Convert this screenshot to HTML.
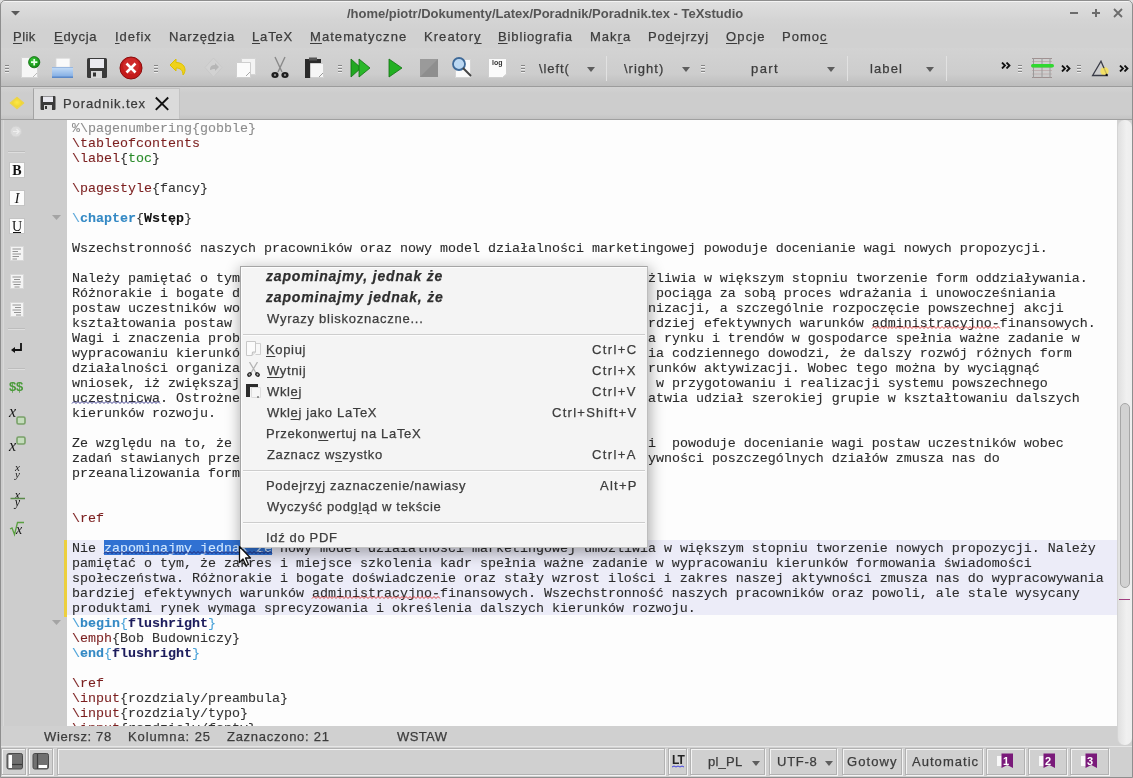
<!DOCTYPE html><html><head><meta charset="utf-8"><style>
*{margin:0;padding:0;box-sizing:border-box}
html,body{-webkit-font-smoothing:antialiased;width:1133px;height:778px;overflow:hidden;background:#d3d3d3;font-family:"Liberation Sans",sans-serif}
.a{position:absolute}
.ui{position:absolute;will-change:transform;-webkit-text-stroke:0.25px currentColor;font-family:"Liberation Sans",sans-serif;font-size:13px;color:#3c3c3c;white-space:nowrap;line-height:16px;letter-spacing:0.55px}
#win{position:absolute;left:0;top:0;width:1133px;height:778px;overflow:hidden;background:#d2d2d2}
#frame{position:absolute;left:0;top:0;width:1133px;height:778px;border:1px solid #8e8e8e;border-radius:5px 5px 0 0}
#title{position:absolute;left:0;top:0;width:1133px;height:48px;background:linear-gradient(#e0e0e0 0px,#d4d4d4 20px,#d1d1d1 30px,#d1d1d1 48px)}
#tbar{position:absolute;left:0;top:48px;width:1133px;height:39px;background:linear-gradient(#d3d3d3 0px,#cdcdcd 26px,#bdbdbd 38px);border-bottom:1px solid #9c9c9c}
#tabs{position:absolute;left:0;top:87px;width:1133px;height:33px;background:linear-gradient(#d2d2d2,#cdcdcd 20%,#cdcdcd 85%,#c4c4c4);border-bottom:1px solid #a0a0a0}
#tab{position:absolute;left:33px;top:88px;width:147px;height:31px;background:#dbdbdb;border:1px solid #c4c4c4;border-left-color:#a4a4a4;border-bottom:none}
#side{position:absolute;left:0;top:120px;width:67px;height:606px;background:#cdcdcd}
#ed{position:absolute;left:67px;top:120px;width:1050px;height:606px;background:#fdfdfd;overflow:hidden}
.ln{position:absolute;will-change:transform;-webkit-text-stroke:0.1px currentColor;left:5px;height:15px;line-height:15px;font-family:"Liberation Mono",monospace;font-size:13.333px;color:#2b2b2b;white-space:pre}
.ln .c{color:#8c8c8c}
.ln .k{color:#7b1f1f}
.ln .b{color:#333}
.ln .g{color:#2a8a2a}
.ln .s{color:#5aa6d8}
.ln .sbold{color:#3489c4;font-weight:bold}
.ln .sb{color:#111;font-weight:bold}
.ln .bl{color:#4aa2d8}
.ln .blb{color:#3489c4;font-weight:bold}
.ln .fb{color:#1c1c5c;font-weight:bold}
.ln .h{color:transparent}
.ln .sel{color:#d2e8ff}
#band{position:absolute;left:0;top:420px;width:1050px;height:76px;background:#ececf8}
#scroll{position:absolute;left:1117px;top:120px;width:15px;height:625px;background:linear-gradient(90deg,#e0e0e0,#f0f0f0 60%,#eeeeee);border-left:1px solid #d4d4d4;border-radius:7px}
#status{position:absolute;left:0;top:726px;width:1133px;height:20px;background:#d0d0d0}
#bottom{position:absolute;left:0;top:746px;width:1133px;height:32px;background:#d0d0d0;border-top:1px solid #e6e6e6}
.sbx{position:absolute;top:748px;height:25px;border:1px solid #f0f0f0;border-right-color:#b4b4b4;border-bottom-color:#b4b4b4;background:#d0d0d0}
#menu{position:absolute;left:240px;top:266px;width:408px;height:282px;background:#f4f4f4;border:1px solid #a5a5a5;border-right-color:#bdbdbd;border-bottom-color:#c4c4c4;box-shadow:1px 4px 13px 2px rgba(0,0,0,0.30),inset 1px 1px 0 #fdfdfd}
.mi{position:absolute;will-change:transform;font-family:"Liberation Sans",sans-serif;font-size:13px;color:#3c3c3c;white-space:nowrap;letter-spacing:0.55px;line-height:16px}
.sep{position:absolute;left:2px;width:402px;height:2px;border-top:1px solid #cdcdcd;border-bottom:1px solid #fcfcfc}
u{text-decoration:underline;text-underline-offset:2px;text-decoration-thickness:1px}
</style></head><body><div id="win">
<div id="title"></div>
<div class="a" style="left:1px;top:1px;width:1131px;height:1px;background:#f4f4f4"></div>
<svg class="a" style="will-change:transform;left:11px;top:11px;" width="9" height="5" viewBox="0 0 9 5"><path d="M0 0H9L4.5 4.5Z" fill="#5a5a5a"/></svg><svg class="a" style="will-change:transform;left:1068px;top:8px;" width="12" height="10" viewBox="0 0 12 10"><rect x="2" y="4" width="8" height="2" fill="#6c6c6c"/></svg><svg class="a" style="will-change:transform;left:1090px;top:8px;" width="12" height="10" viewBox="0 0 12 10"><rect x="2" y="4" width="8" height="2" fill="#6c6c6c"/><rect x="5" y="1" width="2" height="8" fill="#6c6c6c"/></svg><svg class="a" style="will-change:transform;left:1112px;top:8px;" width="12" height="10" viewBox="0 0 12 10"><path d="M2 1L10 9M10 1L2 9" stroke="#6c6c6c" stroke-width="1.8"/></svg>
<div class="ui" style="left:347.30px;top:5.50px;letter-spacing:-0.013px;font-size:13px;font-weight:bold;color:#555;-webkit-text-stroke:0;">/home/piotr/Dokumenty/Latex/Poradnik/Poradnik.tex - TeXstudio</div>
<div class="ui" style="left:13.30px;top:28.50px;letter-spacing:0.467px;font-size:13px;;"><u>P</u>lik</div>
<div class="ui" style="left:53.80px;top:28.50px;letter-spacing:0.700px;font-size:13px;;"><u>E</u>dycja</div>
<div class="ui" style="left:115.20px;top:28.50px;letter-spacing:0.940px;font-size:13px;;"><u>I</u>defix</div>
<div class="ui" style="left:168.90px;top:28.50px;letter-spacing:0.825px;font-size:13px;;">Narzę<u>d</u>zia</div>
<div class="ui" style="left:252.30px;top:28.50px;letter-spacing:0.850px;font-size:13px;;"><u>L</u>aTeX</div>
<div class="ui" style="left:309.90px;top:28.50px;letter-spacing:1.055px;font-size:13px;;"><u>M</u>atematyczne</div>
<div class="ui" style="left:423.80px;top:28.50px;letter-spacing:1.057px;font-size:13px;;">Kreator<u>y</u></div>
<div class="ui" style="left:498.00px;top:28.50px;letter-spacing:0.873px;font-size:13px;;"><u>B</u>ibliografia</div>
<div class="ui" style="left:589.90px;top:28.50px;letter-spacing:1.000px;font-size:13px;;">Mak<u>r</u>a</div>
<div class="ui" style="left:648.20px;top:28.50px;letter-spacing:0.825px;font-size:13px;;">Po<u>d</u>ejrzyj</div>
<div class="ui" style="left:725.80px;top:28.50px;letter-spacing:1.150px;font-size:13px;;"><u>O</u>pcje</div>
<div class="ui" style="left:781.70px;top:28.50px;letter-spacing:1.000px;font-size:13px;;">Pomo<u>c</u></div>
<div id="tbar"></div>
<svg class="a" style="will-change:transform;left:5px;top:65px;" width="5" height="8" viewBox="0 0 5 8"><g fill="#858585"><rect x="0" y="0" width="4" height="1"/><rect x="0" y="3" width="4" height="1"/><rect x="0" y="6" width="4" height="1"/></g><g fill="#ececec"><rect x="0" y="1" width="4" height="1"/><rect x="0" y="4" width="4" height="1"/><rect x="0" y="7" width="4" height="1"/></g></svg><svg class="a" style="will-change:transform;left:19px;top:56px;" width="22" height="23" viewBox="0 0 22 23"><path d="M2.5 1.5H13L18.5 7V21.5H2.5Z" fill="#f6f6f6" stroke="#d4d4d4"/><path d="M14 21L18 17" stroke="#bbb"/><defs><radialGradient id="gp" cx="0.4" cy="0.35" r="0.7"><stop offset="0" stop-color="#3ccc3c"/><stop offset="1" stop-color="#0e860e"/></radialGradient></defs><circle cx="15.2" cy="6.2" r="5.6" fill="url(#gp)" stroke="#0b6a0b" stroke-width="0.8"/><path d="M15.2 3V9.4M12 6.2H18.4" stroke="#e8ffe8" stroke-width="1.7"/></svg><svg class="a" style="will-change:transform;left:51px;top:57px;" width="23" height="22" viewBox="0 0 23 22"><defs><linearGradient id="tray" x1="0" y1="0" x2="0" y2="1"><stop offset="0" stop-color="#c4dcf6"/><stop offset="1" stop-color="#7eaae2"/></linearGradient></defs><rect x="5" y="1.2" width="14" height="9" fill="#fafafa" stroke="#d8d8d8" stroke-width="0.8"/><path d="M1 10.5H22V20.5H1Z" fill="url(#tray)"/><path d="M1 10.5H22" stroke="#9ab8e0"/><rect x="1" y="19.5" width="21" height="1.5" fill="#5a88c8"/></svg><svg class="a" style="will-change:transform;left:86px;top:57px;" width="22" height="22" viewBox="0 0 22 22"><rect x="1" y="1" width="20" height="20" rx="1.5" fill="#3a3a3a"/><rect x="4" y="2" width="14" height="9" fill="#eaeaf0"/><rect x="5" y="14" width="11" height="7" fill="#d8d8d8"/><rect x="7" y="15.5" width="3" height="4" fill="#333"/></svg><svg class="a" style="will-change:transform;left:119px;top:56px;" width="24" height="24" viewBox="0 0 24 24"><circle cx="12" cy="12" r="11" fill="#c41a1a" stroke="#8a0c0c"/><circle cx="12" cy="10" r="8" fill="#d83a3a" opacity="0.5"/><path d="M7.5 7.5L16.5 16.5M16.5 7.5L7.5 16.5" stroke="#fff" stroke-width="2.6"/></svg><svg class="a" style="will-change:transform;left:154px;top:65px;" width="5" height="8" viewBox="0 0 5 8"><g fill="#858585"><rect x="0" y="0" width="4" height="1"/><rect x="0" y="3" width="4" height="1"/><rect x="0" y="6" width="4" height="1"/></g><g fill="#ececec"><rect x="0" y="1" width="4" height="1"/><rect x="0" y="4" width="4" height="1"/><rect x="0" y="7" width="4" height="1"/></g></svg><svg class="a" style="will-change:transform;left:167px;top:57px;" width="21" height="19" viewBox="0 0 21 19"><path d="M3 8L9 2V5.5C15 5.5 18 9 18 13C18 15 17 17 16 18C16 13 13 11 9 11V14Z" fill="#efd21c" stroke="#dcc000" stroke-width="1"/></svg><svg class="a" style="will-change:transform;left:203px;top:57px;" width="21" height="21" viewBox="0 0 21 21"><path d="M10.5 1L19 10.5L10.5 20L2 10.5Z" fill="#d2d2d2" stroke="#c6c6c6" stroke-width="0.8"/><path d="M7 13C7 9 9 8 12 8V6L16 10L12 14V12C10 12 8.5 12.5 7 13Z" fill="#b6b6b6"/></svg><svg class="a" style="will-change:transform;left:235px;top:57px;" width="23" height="22" viewBox="0 0 23 22"><path d="M6.5 1.5H20.5V17.5H6.5Z" fill="#f4f4f4" stroke="#d4d4d4"/><path d="M1.5 5.5H15.5V20.5H1.5Z" fill="#fbfbfb" stroke="#cfcfcf"/><path d="M11 19L15 15" stroke="#aaa"/></svg><svg class="a" style="will-change:transform;left:269px;top:56px;" width="22" height="24" viewBox="0 0 22 24"><path d="M6 1L13 16M16 1L9 16" stroke="#8a8a8a" stroke-width="1.4"/><ellipse cx="6" cy="19" rx="3.6" ry="3" fill="#1e1e1e"/><ellipse cx="16" cy="19" rx="3.6" ry="3" fill="#1e1e1e"/><circle cx="6" cy="19" r="1.2" fill="#888"/><circle cx="16" cy="19" r="1.2" fill="#888"/></svg><svg class="a" style="will-change:transform;left:303px;top:57px;" width="23" height="22" viewBox="0 0 23 22"><path d="M2 2H18V21H2Z" fill="#2a2a2a"/><rect x="6" y="0.5" width="8" height="3" fill="#555"/><path d="M7.5 6.5H20.5V20.5H7.5Z" fill="#f6f6f6" stroke="#d0d0d0"/><path d="M16 20L20 16" stroke="#999"/></svg><svg class="a" style="will-change:transform;left:338px;top:65px;" width="5" height="8" viewBox="0 0 5 8"><g fill="#858585"><rect x="0" y="0" width="4" height="1"/><rect x="0" y="3" width="4" height="1"/><rect x="0" y="6" width="4" height="1"/></g><g fill="#ececec"><rect x="0" y="1" width="4" height="1"/><rect x="0" y="4" width="4" height="1"/><rect x="0" y="7" width="4" height="1"/></g></svg><svg class="a" style="will-change:transform;left:350px;top:58px;" width="22" height="20" viewBox="0 0 22 20"><path d="M1 1L11 10L1 19Z" fill="#22a822" stroke="#127012" stroke-width="0.8"/><path d="M9 1L20 10L9 19Z" fill="#2ab82a" stroke="#127012" stroke-width="0.8"/></svg><svg class="a" style="will-change:transform;left:387px;top:58px;" width="17" height="20" viewBox="0 0 17 20"><path d="M2 1L15 10L2 19Z" fill="#22b022" stroke="#127012" stroke-width="0.8"/></svg><svg class="a" style="will-change:transform;left:419px;top:58px;" width="20" height="20" viewBox="0 0 20 20"><rect x="1" y="1" width="18" height="18" fill="#8e8e8e"/><path d="M1 1H19L1 19Z" fill="#a2a2a2" opacity="0.6"/></svg><svg class="a" style="will-change:transform;left:451px;top:56px;" width="24" height="23" viewBox="0 0 24 23"><path d="M4.5 3.5H19.5V21.5H4.5Z" fill="#fafafa" stroke="#d4d4d4"/><circle cx="8" cy="8" r="6" fill="#bcd8f2" stroke="#3f6a99" stroke-width="1.8"/><path d="M12 12L20 20" stroke="#444" stroke-width="2"/></svg><svg class="a" style="will-change:transform;left:487px;top:57px;" width="21" height="22" viewBox="0 0 21 22"><path d="M1.5 1.5H19.5V17L15.5 20.5H1.5Z" fill="#fbfbfb" stroke="#cfcfcf"/><text x="5" y="8" font-family="Liberation Sans" font-size="7" font-weight="bold" fill="#333">log</text></svg><svg class="a" style="will-change:transform;left:521px;top:65px;" width="5" height="8" viewBox="0 0 5 8"><g fill="#858585"><rect x="0" y="0" width="4" height="1"/><rect x="0" y="3" width="4" height="1"/><rect x="0" y="6" width="4" height="1"/></g><g fill="#ececec"><rect x="0" y="1" width="4" height="1"/><rect x="0" y="4" width="4" height="1"/><rect x="0" y="7" width="4" height="1"/></g></svg><svg class="a" style="will-change:transform;left:587px;top:67px;" width="8" height="5" viewBox="0 0 8 5"><path d="M0 0H8L4 5Z" fill="#5d5d5d"/></svg><div class="a" style="left:606px;top:56px;width:1px;height:25px;background:#bdbdbd;border-right:1px solid #e2e2e2"></div><svg class="a" style="will-change:transform;left:682px;top:67px;" width="8" height="5" viewBox="0 0 8 5"><path d="M0 0H8L4 5Z" fill="#5d5d5d"/></svg><svg class="a" style="will-change:transform;left:701px;top:65px;" width="5" height="8" viewBox="0 0 5 8"><g fill="#858585"><rect x="0" y="0" width="4" height="1"/><rect x="0" y="3" width="4" height="1"/><rect x="0" y="6" width="4" height="1"/></g><g fill="#ececec"><rect x="0" y="1" width="4" height="1"/><rect x="0" y="4" width="4" height="1"/><rect x="0" y="7" width="4" height="1"/></g></svg><svg class="a" style="will-change:transform;left:827px;top:67px;" width="8" height="5" viewBox="0 0 8 5"><path d="M0 0H8L4 5Z" fill="#5d5d5d"/></svg><div class="a" style="left:847px;top:56px;width:1px;height:25px;background:#bdbdbd;border-right:1px solid #e2e2e2"></div><svg class="a" style="will-change:transform;left:926px;top:67px;" width="8" height="5" viewBox="0 0 8 5"><path d="M0 0H8L4 5Z" fill="#5d5d5d"/></svg><div class="a" style="left:946px;top:56px;width:1px;height:25px;background:#bdbdbd;border-right:1px solid #e2e2e2"></div><svg class="a" style="will-change:transform;left:1001px;top:62px;" width="11" height="7" viewBox="0 0 11 7"><path d="M1 0.5L4 3.5L1 6.5M5.5 0.5L8.5 3.5L5.5 6.5" stroke="#111" stroke-width="1.8" fill="none"/></svg><svg class="a" style="will-change:transform;left:1018px;top:65px;" width="5" height="8" viewBox="0 0 5 8"><g fill="#858585"><rect x="0" y="0" width="4" height="1"/><rect x="0" y="3" width="4" height="1"/><rect x="0" y="6" width="4" height="1"/></g><g fill="#ececec"><rect x="0" y="1" width="4" height="1"/><rect x="0" y="4" width="4" height="1"/><rect x="0" y="7" width="4" height="1"/></g></svg><svg class="a" style="will-change:transform;left:1030px;top:57px;" width="24" height="22" viewBox="0 0 24 22"><g stroke="#a09090" stroke-width="1"><path d="M2 1.5H22M2 20.5H22"/><path d="M2 4.5H22M2 10.5H22M2 13.5H22M2 17H22" stroke="#c0b0b0"/><path d="M3.5 1V21M12 1V21M20 1V21" stroke="#9a9a9a"/></g><rect x="1" y="7" width="23" height="3.5" rx="1.7" fill="#30d830"/></svg><svg class="a" style="will-change:transform;left:1061px;top:65px;" width="11" height="7" viewBox="0 0 11 7"><path d="M1 0.5L4 3.5L1 6.5M5.5 0.5L8.5 3.5L5.5 6.5" stroke="#111" stroke-width="1.8" fill="none"/></svg><svg class="a" style="will-change:transform;left:1077px;top:65px;" width="5" height="8" viewBox="0 0 5 8"><g fill="#858585"><rect x="0" y="0" width="4" height="1"/><rect x="0" y="3" width="4" height="1"/><rect x="0" y="6" width="4" height="1"/></g><g fill="#ececec"><rect x="0" y="1" width="4" height="1"/><rect x="0" y="4" width="4" height="1"/><rect x="0" y="7" width="4" height="1"/></g></svg><svg class="a" style="will-change:transform;left:1090px;top:60px;" width="22" height="19" viewBox="0 0 22 19"><circle cx="14.5" cy="11.2" r="4.2" fill="#f2df6a" opacity="0.9"/><path d="M11 1.2L17.2 15.5H2.6Z" fill="none" stroke="#3a3c48" stroke-width="1.3" stroke-linejoin="miter"/><circle cx="14.5" cy="11.2" r="3.3" fill="#f4e060" opacity="0.75"/><circle cx="16.6" cy="14.9" r="1.1" fill="#111"/></svg><svg class="a" style="will-change:transform;left:1119px;top:65px;" width="11" height="7" viewBox="0 0 11 7"><path d="M1 0.5L4 3.5L1 6.5M5.5 0.5L8.5 3.5L5.5 6.5" stroke="#111" stroke-width="1.8" fill="none"/></svg>
<div class="ui" style="left:539.00px;top:61.20px;letter-spacing:0.900px;font-size:13px;;">\left(</div>
<div class="ui" style="left:623.50px;top:61.20px;letter-spacing:1.000px;font-size:13px;;">\right)</div>
<div class="ui" style="left:750.50px;top:61.20px;letter-spacing:1.400px;font-size:13px;;">part</div>
<div class="ui" style="left:870.10px;top:61.20px;letter-spacing:1.100px;font-size:13px;;">label</div>
<div id="tabs"></div><div id="tab"></div>
<svg class="a" style="will-change:transform;left:9px;top:96px;" width="16" height="14" viewBox="0 0 16 14"><defs><radialGradient id="yb" cx="0.5" cy="0.45" r="0.55"><stop offset="0" stop-color="#fbe84a"/><stop offset="0.8" stop-color="#f0d428"/><stop offset="1" stop-color="#e8d060" stop-opacity="0.6"/></radialGradient></defs><path d="M1.5 7L8 1.5L14.5 7L8 12.5Z" fill="url(#yb)" stroke="#ecd44a" stroke-width="1.6" stroke-linejoin="round"/></svg><svg class="a" style="will-change:transform;left:40px;top:95px;" width="16" height="16" viewBox="0 0 16 16"><rect x="0.5" y="1" width="15" height="14" rx="1" fill="#3a3a3a"/><rect x="3" y="1.5" width="10" height="5.5" fill="#e8e8ee"/><rect x="4" y="10" width="8" height="5" fill="#d8d8d8"/><rect x="5" y="11" width="2" height="3" fill="#333"/></svg><svg class="a" style="will-change:transform;left:154px;top:96px;" width="16" height="15" viewBox="0 0 16 15"><path d="M1.8 1.5L14.2 13.8M14.2 1.5L1.8 13.8" stroke="#111" stroke-width="1.9"/></svg>
<div class="ui" style="left:63.40px;top:95.50px;letter-spacing:0.891px;font-size:13px;;">Poradnik.tex</div>
<div id="side"></div>
<div class="a" style="left:3px;top:120px;width:1px;height:606px;background:#d9d9d9"></div>
<svg class="a" style="will-change:transform;left:9px;top:125px;" width="14" height="13" viewBox="0 0 14 13"><circle cx="7" cy="6.5" r="5.5" fill="#dcdcdc" stroke="#d0d0d0"/><path d="M4 6.5H10M7.5 4L10 6.5L7.5 9" stroke="#eeeeee" stroke-width="1.2" fill="none"/></svg><div class="a" style="left:8px;top:151px;width:17px;height:2px;border-top:1px solid #bdbdbd;border-bottom:1px solid #dedede"></div><svg class="a" style="will-change:transform;left:9px;top:162px;" width="16" height="16" viewBox="0 0 16 16"><rect x="0.5" y="0.5" width="15" height="15" fill="#fcfcfc" stroke="#c4c4c4"/><text x="8" y="13" text-anchor="middle" font-family="Liberation Serif" font-weight="bold" font-size="14" fill="#111">B</text></svg><svg class="a" style="will-change:transform;left:9px;top:190px;" width="16" height="16" viewBox="0 0 16 16"><rect x="0.5" y="0.5" width="15" height="15" fill="#fcfcfc" stroke="#c4c4c4"/><text x="8" y="13" text-anchor="middle" font-family="Liberation Serif" font-style="italic" font-size="14" fill="#111">I</text></svg><svg class="a" style="will-change:transform;left:9px;top:218px;" width="16" height="16" viewBox="0 0 16 16"><rect x="0.5" y="0.5" width="15" height="15" fill="#fcfcfc" stroke="#c4c4c4"/><text x="8" y="13" text-anchor="middle" font-family="Liberation Serif" font-size="14" fill="#111">U</text><path d="M4 14.5H12" stroke="#111"/></svg><svg class="a" style="will-change:transform;left:10px;top:246px;" width="14" height="15" viewBox="0 0 14 15"><rect x="0.5" y="0.5" width="13" height="14" fill="#f4f4f4" stroke="#d8d8d8"/><path d="M2.5 3H11M2.5 5.5H8M2.5 8H11M2.5 10.5H9M2.5 13H7" stroke="#888" stroke-width="0.9"/></svg><svg class="a" style="will-change:transform;left:10px;top:274px;" width="14" height="15" viewBox="0 0 14 15"><rect x="0.5" y="0.5" width="13" height="14" fill="#f4f4f4" stroke="#d8d8d8"/><path d="M2.5 3H11M4 5.5H10M2.5 8H11M3.5 10.5H10.5M4.5 13H9.5" stroke="#888" stroke-width="0.9"/></svg><svg class="a" style="will-change:transform;left:10px;top:302px;" width="14" height="15" viewBox="0 0 14 15"><rect x="0.5" y="0.5" width="13" height="14" fill="#f4f4f4" stroke="#d8d8d8"/><path d="M2.5 3H11M5 5.5H11M2.5 8H11M4 10.5H11M6 13H11" stroke="#888" stroke-width="0.9"/></svg><div class="a" style="left:8px;top:328px;width:17px;height:2px;border-top:1px solid #bdbdbd;border-bottom:1px solid #dedede"></div><svg class="a" style="will-change:transform;left:10px;top:342px;" width="14" height="13" viewBox="0 0 14 13"><path d="M11 1V8H3" stroke="#111" stroke-width="1.8" fill="none"/><path d="M1 8L5 5V11Z" fill="#111"/></svg><div class="a" style="left:8px;top:368px;width:17px;height:2px;border-top:1px solid #bdbdbd;border-bottom:1px solid #dedede"></div><div class="a" style="left:9px;top:379px;font-family:&quot;Liberation Sans&quot;;font-weight:bold;font-size:13px;color:#4a9a3a;letter-spacing:-0.3px;will-change:transform">$$</div><svg class="a" style="will-change:transform;left:8px;top:405px;" width="20" height="20" viewBox="0 0 20 20"><text x="1" y="12" font-family="Liberation Serif" font-style="italic" font-size="16" fill="#111">x</text><rect x="9" y="12" width="8" height="7" rx="1.5" fill="#c4dcbc" stroke="#78a068" stroke-width="1.6"/></svg><svg class="a" style="will-change:transform;left:8px;top:433px;" width="20" height="22" viewBox="0 0 20 22"><text x="1" y="18" font-family="Liberation Serif" font-style="italic" font-size="16" fill="#111">x</text><rect x="9" y="4" width="8" height="7" rx="1.5" fill="#c4dcbc" stroke="#78a068" stroke-width="1.6"/></svg><svg class="a" style="will-change:transform;left:8px;top:462px;" width="20" height="20" viewBox="0 0 20 20"><text x="9.5" y="9" text-anchor="middle" font-family="Liberation Serif" font-style="italic" font-size="11" fill="#1a1a1a">x</text><text x="9.5" y="15.5" text-anchor="middle" font-family="Liberation Serif" font-style="italic" font-size="11" fill="#1a1a1a">y</text></svg><svg class="a" style="will-change:transform;left:8px;top:489px;" width="20" height="21" viewBox="0 0 20 21"><text x="9.5" y="9.5" text-anchor="middle" font-family="Liberation Serif" font-style="italic" font-size="12" fill="#111">x</text><text x="9.5" y="17" text-anchor="middle" font-family="Liberation Serif" font-style="italic" font-size="12" fill="#111">y</text><path d="M2.5 9.5H17" stroke="#5a8a4a" stroke-width="1.5"/></svg><svg class="a" style="will-change:transform;left:8px;top:519px;" width="18" height="18" viewBox="0 0 18 18"><path d="M2 10L4 9L6.5 15.5L9.5 3.5H16" stroke="#5aa040" stroke-width="1.3" fill="none"/><text x="8" y="15" font-family="Liberation Serif" font-style="italic" font-size="14" fill="#111">x</text></svg>
<div id="ed">
<div class="a" style="left:0;top:420px;width:1050px;height:75px;background:#ececf8"></div>
<div class="a" style="left:37px;top:420px;width:168px;height:15px;background:#3071d2"></div>
<div class="ln" style="top:1px"><span class="c">%\pagenumbering{gobble}</span></div>
<div class="ln" style="top:16px"><span class="k">\tableofcontents</span></div>
<div class="ln" style="top:31px"><span class="k">\label</span><span class="b">{</span><span class="g">toc</span><span class="b">}</span></div>
<div class="ln" style="top:46px"></div>
<div class="ln" style="top:61px"><span class="k">\pagestyle</span><span class="b">{fancy}</span></div>
<div class="ln" style="top:76px"></div>
<div class="ln" style="top:91px"><span class="s">\</span><span class="sbold">chapter</span><span class="b">{</span><span class="sb">Wstęp</span><span class="b">}</span></div>
<div class="ln" style="top:106px"></div>
<div class="ln" style="top:121px">Wszechstronność naszych pracowników oraz nowy model działalności marketingowej powoduje docenianie wagi nowych propozycji.</div>
<div class="ln" style="top:136px"></div>
<div class="ln" style="top:151px">Należy pamiętać o tym<span class="h">xxxxxxxxxxxxxxxxxxxxxxxxxxxxxxxxxxxxxxxxxxxxxxxxxxx</span>żliwia w większym stopniu tworzenie form oddziaływania.</div>
<div class="ln" style="top:166px">Różnorakie i bogate d<span class="h">xxxxxxxxxxxxxxxxxxxxxxxxxxxxxxxxxxxxxxxxxxxxxxxxxxx</span> pociąga za sobą proces wdrażania i unowocześniania</div>
<div class="ln" style="top:181px">postaw uczestników wo<span class="h">xxxxxxxxxxxxxxxxxxxxxxxxxxxxxxxxxxxxxxxxxxxxxxxxxxx</span>nizacji, a szczególnie rozpoczęcie powszechnej akcji</div>
<div class="ln" style="top:196px">kształtowania postaw <span class="h">xxxxxxxxxxxxxxxxxxxxxxxxxxxxxxxxxxxxxxxxxxxxxxxxxxx</span>rdziej efektywnych warunków administracyjno-finansowych.</div>
<div class="ln" style="top:211px">Wagi i znaczenia prob<span class="h">xxxxxxxxxxxxxxxxxxxxxxxxxxxxxxxxxxxxxxxxxxxxxxxxxxx</span>a rynku i trendów w gospodarce spełnia ważne zadanie w</div>
<div class="ln" style="top:226px">wypracowaniu kierunkó<span class="h">xxxxxxxxxxxxxxxxxxxxxxxxxxxxxxxxxxxxxxxxxxxxxxxxxxx</span>ia codziennego dowodzi, że dalszy rozwój różnych form</div>
<div class="ln" style="top:241px">działalności organiza<span class="h">xxxxxxxxxxxxxxxxxxxxxxxxxxxxxxxxxxxxxxxxxxxxxxxxxxx</span>runków aktywizacji. Wobec tego można by wyciągnąć</div>
<div class="ln" style="top:256px">wniosek, iż zwiększaj<span class="h">xxxxxxxxxxxxxxxxxxxxxxxxxxxxxxxxxxxxxxxxxxxxxxxxxxx</span> w przygotowaniu i realizacji systemu powszechnego</div>
<div class="ln" style="top:271px">uczestnicwa. Ostrożne<span class="h">xxxxxxxxxxxxxxxxxxxxxxxxxxxxxxxxxxxxxxxxxxxxxxxxxxx</span>atwia udział szerokiej grupie w kształtowaniu dalszych</div>
<div class="ln" style="top:286px">kierunków rozwoju.</div>
<div class="ln" style="top:301px"></div>
<div class="ln" style="top:316px">Ze względu na to, że <span class="h">xxxxxxxxxxxxxxxxxxxxxxxxxxxxxxxxxxxxxxxxxxxxxxxxxxx</span>i  powoduje docenianie wagi postaw uczestników wobec</div>
<div class="ln" style="top:331px">zadań stawianych prze<span class="h">xxxxxxxxxxxxxxxxxxxxxxxxxxxxxxxxxxxxxxxxxxxxxxxxxxx</span>ywności poszczególnych działów zmusza nas do</div>
<div class="ln" style="top:346px">przeanalizowania form</div>
<div class="ln" style="top:361px"></div>
<div class="ln" style="top:376px"></div>
<div class="ln" style="top:391px"><span class="k">\ref</span></div>
<div class="ln" style="top:406px"></div>
<div class="ln" style="top:421px">Nie <span class="sel">zapominajmy jednak że</span> nowy model działalności marketingowej umożliwia w większym stopniu tworzenie nowych propozycji. Należy</div>
<div class="ln" style="top:436px">pamiętać o tym, że zakres i miejsce szkolenia kadr spełnia ważne zadanie w wypracowaniu kierunków formowania świadomości</div>
<div class="ln" style="top:451px">społeczeństwa. Różnorakie i bogate doświadczenie oraz stały wzrost ilości i zakres naszej aktywności zmusza nas do wypracowywania</div>
<div class="ln" style="top:466px">bardziej efektywnych warunków administracyjno-finansowych. Wszechstronność naszych pracowników oraz powoli, ale stale wysycany</div>
<div class="ln" style="top:481px">produktami rynek wymaga sprecyzowania i określenia dalszych kierunków rozwoju.</div>
<div class="ln" style="top:496px"><span class="bl">\</span><span class="blb">begin</span><span class="bl">{</span><span class="fb">flushright</span><span class="bl">}</span></div>
<div class="ln" style="top:511px"><span class="k">\emph</span><span class="b">{Bob Budowniczy}</span></div>
<div class="ln" style="top:526px"><span class="bl">\</span><span class="blb">end</span><span class="bl">{</span><span class="fb">flushright</span><span class="bl">}</span></div>
<div class="ln" style="top:541px"></div>
<div class="ln" style="top:556px"><span class="k">\ref</span></div>
<div class="ln" style="top:571px"><span class="k">\input</span><span class="b">{rozdzialy/preambula}</span></div>
<div class="ln" style="top:586px"><span class="k">\input</span><span class="b">{rozdzialy/typo}</span></div>
<div class="ln" style="top:601px"><span class="k">\input</span><span class="b">{rozdzialy/fonty}</span></div>
<svg class="a" style="left:0;top:0" width="1050" height="606"><path d="M805.0 208.5 L807.0 206.5 L809.0 208.5 L811.0 206.5 L813.0 208.5 L815.0 206.5 L817.0 208.5 L819.0 206.5 L821.0 208.5 L823.0 206.5 L825.0 208.5 L827.0 206.5 L829.0 208.5 L831.0 206.5 L833.0 208.5 L835.0 206.5 L837.0 208.5 L839.0 206.5 L841.0 208.5 L843.0 206.5 L845.0 208.5 L847.0 206.5 L849.0 208.5 L851.0 206.5 L853.0 208.5 L855.0 206.5 L857.0 208.5 L859.0 206.5 L861.0 208.5 L863.0 206.5 L865.0 208.5 L867.0 206.5 L869.0 208.5 L871.0 206.5 L873.0 208.5 L875.0 206.5 L877.0 208.5 L879.0 206.5 L881.0 208.5 L883.0 206.5 L885.0 208.5 L887.0 206.5 L889.0 208.5 L891.0 206.5 L893.0 208.5 L895.0 206.5 L897.0 208.5 L899.0 206.5 L901.0 208.5 L903.0 206.5 L905.0 208.5 L907.0 206.5 L909.0 208.5 L911.0 206.5 L913.0 208.5 L915.0 206.5 L917.0 208.5 L919.0 206.5 L921.0 208.5 L923.0 206.5 L925.0 208.5 L927.0 206.5 L929.0 208.5 L931.0 206.5 L933.0 208.5" stroke="#d84040" stroke-width="1" fill="none"/><path d="M5.0 283.5 L7.0 281.5 L9.0 283.5 L11.0 281.5 L13.0 283.5 L15.0 281.5 L17.0 283.5 L19.0 281.5 L21.0 283.5 L23.0 281.5 L25.0 283.5 L27.0 281.5 L29.0 283.5 L31.0 281.5 L33.0 283.5 L35.0 281.5 L37.0 283.5 L39.0 281.5 L41.0 283.5 L43.0 281.5 L45.0 283.5 L47.0 281.5 L49.0 283.5 L51.0 281.5 L53.0 283.5 L55.0 281.5 L57.0 283.5 L59.0 281.5 L61.0 283.5 L63.0 281.5 L65.0 283.5 L67.0 281.5 L69.0 283.5 L71.0 281.5 L73.0 283.5 L75.0 281.5 L77.0 283.5 L79.0 281.5 L81.0 283.5 L83.0 281.5 L85.0 283.5 L87.0 281.5 L89.0 283.5 L91.0 281.5 L93.0 283.5" stroke="#3a3a8a" stroke-width="1" fill="none"/><path d="M37.0 433.5 L39.0 431.5 L41.0 433.5 L43.0 431.5 L45.0 433.5 L47.0 431.5 L49.0 433.5 L51.0 431.5 L53.0 433.5 L55.0 431.5 L57.0 433.5 L59.0 431.5 L61.0 433.5 L63.0 431.5 L65.0 433.5 L67.0 431.5 L69.0 433.5 L71.0 431.5 L73.0 433.5 L75.0 431.5 L77.0 433.5 L79.0 431.5 L81.0 433.5 L83.0 431.5 L85.0 433.5 L87.0 431.5 L89.0 433.5 L91.0 431.5 L93.0 433.5 L95.0 431.5 L97.0 433.5 L99.0 431.5 L101.0 433.5 L103.0 431.5 L105.0 433.5 L107.0 431.5 L109.0 433.5 L111.0 431.5 L113.0 433.5 L115.0 431.5 L117.0 433.5 L119.0 431.5 L121.0 433.5 L123.0 431.5 L125.0 433.5 L127.0 431.5 L129.0 433.5 L131.0 431.5 L133.0 433.5 L135.0 431.5 L137.0 433.5 L139.0 431.5 L141.0 433.5 L143.0 431.5 L145.0 433.5 L147.0 431.5 L149.0 433.5 L151.0 431.5 L153.0 433.5 L155.0 431.5 L157.0 433.5 L159.0 431.5 L161.0 433.5 L163.0 431.5 L165.0 433.5 L167.0 431.5 L169.0 433.5 L171.0 431.5 L173.0 433.5 L175.0 431.5 L177.0 433.5 L179.0 431.5 L181.0 433.5 L183.0 431.5 L185.0 433.5 L187.0 431.5 L189.0 433.5 L191.0 431.5 L193.0 433.5 L195.0 431.5 L197.0 433.5 L199.0 431.5 L201.0 433.5 L203.0 431.5 L205.0 433.5" stroke="#1c1c6a" stroke-width="0.9" fill="none"/><path d="M245.0 478.5 L247.0 476.5 L249.0 478.5 L251.0 476.5 L253.0 478.5 L255.0 476.5 L257.0 478.5 L259.0 476.5 L261.0 478.5 L263.0 476.5 L265.0 478.5 L267.0 476.5 L269.0 478.5 L271.0 476.5 L273.0 478.5 L275.0 476.5 L277.0 478.5 L279.0 476.5 L281.0 478.5 L283.0 476.5 L285.0 478.5 L287.0 476.5 L289.0 478.5 L291.0 476.5 L293.0 478.5 L295.0 476.5 L297.0 478.5 L299.0 476.5 L301.0 478.5 L303.0 476.5 L305.0 478.5 L307.0 476.5 L309.0 478.5 L311.0 476.5 L313.0 478.5 L315.0 476.5 L317.0 478.5 L319.0 476.5 L321.0 478.5 L323.0 476.5 L325.0 478.5 L327.0 476.5 L329.0 478.5 L331.0 476.5 L333.0 478.5 L335.0 476.5 L337.0 478.5 L339.0 476.5 L341.0 478.5 L343.0 476.5 L345.0 478.5 L347.0 476.5 L349.0 478.5 L351.0 476.5 L353.0 478.5 L355.0 476.5 L357.0 478.5 L359.0 476.5 L361.0 478.5 L363.0 476.5 L365.0 478.5 L367.0 476.5 L369.0 478.5 L371.0 476.5 L373.0 478.5" stroke="#d84040" stroke-width="1" fill="none"/></svg>
</div>
<div class="a" style="left:64px;top:540px;width:3px;height:77px;background:#eccf3e"></div>
<svg class="a" style="will-change:transform;left:52px;top:215px;" width="10" height="6" viewBox="0 0 10 6"><path d="M0 0H9L4.5 5Z" fill="#a4a4a4"/></svg><svg class="a" style="will-change:transform;left:52px;top:620px;" width="10" height="6" viewBox="0 0 10 6"><path d="M0 0H9L4.5 5Z" fill="#a4a4a4"/></svg>
<div id="status"></div>
<div class="ui" style="left:43.70px;top:728.90px;letter-spacing:0.644px;font-size:13px;;">Wiersz: 78</div>
<div class="ui" style="left:127.50px;top:728.90px;letter-spacing:0.900px;font-size:13px;;">Kolumna: 25</div>
<div class="ui" style="left:227.10px;top:728.90px;letter-spacing:0.723px;font-size:13px;;">Zaznaczono: 21</div>
<div class="ui" style="left:396.50px;top:728.90px;letter-spacing:0.400px;font-size:13px;;">WSTAW</div>
<div id="scroll"></div>
<div class="a" style="left:1120px;top:403px;width:10px;height:185px;border-radius:5px;background:#d2d2d2;border:1px solid #a6a6a6"></div><div class="a" style="left:1119px;top:599px;width:11px;height:1px;background:#a04080"></div>
<div id="bottom"></div>
<div class="a" style="left:2px;top:749px;width:25px;height:27px;border:1px solid #f4f4f4"></div><div class="a" style="left:1px;top:748px;width:25px;height:27px;border:1px solid #b2b2b2"><svg class="a" style="will-change:transform;left:4px;top:4px;" width="17" height="17" viewBox="0 0 17 17"><rect x="1" y="0.5" width="15.5" height="15.5" rx="1.8" fill="#707070" stroke="#4a4a4a"/><rect x="2.5" y="2" width="3.5" height="13" fill="#fff"/><path d="M6 11.5H16" stroke="#3a3a3a" stroke-width="1.2"/></svg></div><div class="a" style="left:29px;top:749px;width:25px;height:27px;border:1px solid #f4f4f4"></div><div class="a" style="left:28px;top:748px;width:25px;height:27px;border:1px solid #b2b2b2"><svg class="a" style="will-change:transform;left:3px;top:4px;" width="17" height="17" viewBox="0 0 17 17"><rect x="1" y="0.5" width="15.5" height="15.5" rx="1.8" fill="#707070" stroke="#4a4a4a"/><rect x="6.5" y="12" width="8.5" height="3" fill="#fff"/><path d="M5.5 1V16" stroke="#3a3a3a" stroke-width="1.2"/></svg></div><div class="a" style="left:58px;top:749px;width:608px;height:27px;border:1px solid #f4f4f4"></div><div class="a" style="left:57px;top:748px;width:608px;height:27px;border:1px solid #b2b2b2"></div><div class="a" style="left:669px;top:749px;width:19px;height:27px;border:1px solid #f4f4f4"></div><div class="a" style="left:668px;top:748px;width:19px;height:27px;border:1px solid #b2b2b2"><svg class="a" style="will-change:transform;left:2px;top:4px;" width="14" height="17" viewBox="0 0 14 17"><text x="7" y="11" text-anchor="middle" font-family="Liberation Sans" font-weight="bold" font-size="12" fill="#222" letter-spacing="-1">LT</text><path d="M1 14L3 13L5 14L7 13L9 14L11 13L13 14" stroke="#4040e0" fill="none"/></svg></div><div class="a" style="left:691px;top:749px;width:75px;height:27px;border:1px solid #f4f4f4"></div><div class="a" style="left:690px;top:748px;width:75px;height:27px;border:1px solid #b2b2b2"></div><svg class="a" style="will-change:transform;left:752px;top:761px;" width="8" height="5" viewBox="0 0 8 5"><path d="M0 0H8L4 5Z" fill="#5d5d5d"/></svg><div class="a" style="left:770px;top:749px;width:68px;height:27px;border:1px solid #f4f4f4"></div><div class="a" style="left:769px;top:748px;width:68px;height:27px;border:1px solid #b2b2b2"></div><svg class="a" style="will-change:transform;left:825px;top:761px;" width="8" height="5" viewBox="0 0 8 5"><path d="M0 0H8L4 5Z" fill="#5d5d5d"/></svg><div class="a" style="left:843px;top:749px;width:60px;height:27px;border:1px solid #f4f4f4"></div><div class="a" style="left:842px;top:748px;width:60px;height:27px;border:1px solid #b2b2b2"></div><div class="a" style="left:906px;top:749px;width:78px;height:27px;border:1px solid #f4f4f4"></div><div class="a" style="left:905px;top:748px;width:78px;height:27px;border:1px solid #b2b2b2"></div><div class="a" style="left:987px;top:749px;width:39px;height:27px;border:1px solid #f4f4f4"></div><div class="a" style="left:986px;top:748px;width:39px;height:27px;border:1px solid #b2b2b2"></div><div class="a" style="left:1029px;top:749px;width:39px;height:27px;border:1px solid #f4f4f4"></div><div class="a" style="left:1028px;top:748px;width:39px;height:27px;border:1px solid #b2b2b2"></div><div class="a" style="left:1071px;top:749px;width:39px;height:27px;border:1px solid #f4f4f4"></div><div class="a" style="left:1070px;top:748px;width:39px;height:27px;border:1px solid #b2b2b2"></div><svg class="a" style="will-change:transform;left:997px;top:753px;" width="17" height="16" viewBox="0 0 17 16"><rect x="0" y="3" width="6" height="10" fill="#f8f8f8"/><path d="M4.5 0.5H16V15L10.25 12L4.5 15Z" fill="#7a1a7a"/><text x="9" y="11.5" text-anchor="middle" font-family="Liberation Sans" font-weight="bold" font-size="11" fill="#fff">1</text></svg><svg class="a" style="will-change:transform;left:1039px;top:753px;" width="17" height="16" viewBox="0 0 17 16"><rect x="0" y="3" width="6" height="10" fill="#f8f8f8"/><path d="M4.5 0.5H16V15L10.25 12L4.5 15Z" fill="#7a1a7a"/><text x="9" y="11.5" text-anchor="middle" font-family="Liberation Sans" font-weight="bold" font-size="11" fill="#fff">2</text></svg><svg class="a" style="will-change:transform;left:1081px;top:753px;" width="17" height="16" viewBox="0 0 17 16"><rect x="0" y="3" width="6" height="10" fill="#f8f8f8"/><path d="M4.5 0.5H16V15L10.25 12L4.5 15Z" fill="#7a1a7a"/><text x="9" y="11.5" text-anchor="middle" font-family="Liberation Sans" font-weight="bold" font-size="11" fill="#fff">3</text></svg>
<div class="ui" style="left:707.50px;top:753.50px;letter-spacing:0.250px;font-size:13px;;">pl_PL</div>
<div class="ui" style="left:776.50px;top:753.50px;letter-spacing:0.750px;font-size:13px;;">UTF-8</div>
<div class="ui" style="left:846.70px;top:753.50px;letter-spacing:1.100px;font-size:13px;;">Gotowy</div>
<div class="ui" style="left:912.10px;top:753.50px;letter-spacing:1.037px;font-size:13px;;">Automatic</div>
<div id="menu"><div class="sep" style="top:67px"></div><svg class="a" style="will-change:transform;left:4px;top:74px;" width="17" height="16" viewBox="0 0 17 16"><path d="M10.5 2.5H15.5V13.5H10.5" fill="#f8f8f8" stroke="#cfcfcf"/><path d="M1.5 0.5H10.5V11L7 14.5H1.5Z" fill="#fbfbfb" stroke="#c8c8c8"/><path d="M7 14.5L7.5 11H10.5" fill="#e4e4e4" stroke="#c0c0c0"/></svg><svg class="a" style="will-change:transform;left:4px;top:95px;" width="17" height="16" viewBox="0 0 17 16"><path d="M4.5 0L11 11M12.5 0L6 11" stroke="#b4b4b4" stroke-width="1.3"/><ellipse cx="4.5" cy="12.5" rx="2.6" ry="2.1" fill="#2a2a2a" transform="rotate(-35 4.5 12.5)"/><ellipse cx="12.5" cy="12.5" rx="2.6" ry="2.1" fill="#2a2a2a" transform="rotate(35 12.5 12.5)"/><circle cx="4.5" cy="12.5" r="0.9" fill="#bbb"/><circle cx="12.5" cy="12.5" r="0.9" fill="#bbb"/></svg><svg class="a" style="will-change:transform;left:4px;top:116px;" width="17" height="16" viewBox="0 0 17 16"><path d="M6.5 4.5H15.5V14.5H6.5Z" fill="#f6f6f6" stroke="#dedede"/><path d="M1 1H13V4H5V14H1Z" fill="#2c2c2c"/><circle cx="13" cy="14" r="0.8" fill="#333"/></svg><div class="sep" style="top:203px"></div><div class="sep" style="top:255px"></div>
<div class="ui" style="left:25.10px;top:1.15px;letter-spacing:0.829px;font-size:14px;font-weight:bold;font-style:italic;color:#2e2e2e;">zapominajmy, jednak że</div>
<div class="ui" style="left:25.10px;top:22.15px;letter-spacing:0.829px;font-size:14px;font-weight:bold;font-style:italic;color:#2e2e2e;">zapominajmy jednak, że</div>
<div class="ui" style="left:26.00px;top:43.50px;letter-spacing:0.750px;font-size:13px;;">Wyrazy bliskoznaczne...</div>
<div class="ui" style="left:24.80px;top:75.00px;letter-spacing:0.650px;font-size:13px;;"><u>K</u>opiuj</div>
<div class="ui" style="left:25.80px;top:96.00px;letter-spacing:0.650px;font-size:13px;;"><u>W</u>ytnij</div>
<div class="ui" style="left:25.80px;top:117.00px;letter-spacing:0.650px;font-size:13px;;">Wkl<u>e</u>j</div>
<div class="ui" style="left:25.80px;top:138.00px;letter-spacing:0.650px;font-size:13px;;">Wkl<u>e</u>j jako LaTeX</div>
<div class="ui" style="left:24.80px;top:159.00px;letter-spacing:0.650px;font-size:13px;;">Przekon<u>w</u>ertuj na LaTeX</div>
<div class="ui" style="left:25.80px;top:180.00px;letter-spacing:0.650px;font-size:13px;;">Zaznacz w<u>s</u>zystko</div>
<div class="ui" style="left:25.10px;top:211.00px;letter-spacing:0.700px;font-size:13px;;">Podejrz<u>y</u>j zaznaczenie/nawiasy</div>
<div class="ui" style="left:25.80px;top:232.00px;letter-spacing:0.650px;font-size:13px;;">Wyczyść podg<u>l</u>ąd w tekście</div>
<div class="ui" style="left:24.80px;top:263.00px;letter-spacing:0.650px;font-size:13px;;">Idź do PDF</div>
<div class="ui" style="left:351.00px;top:75.00px;letter-spacing:1.400px;font-size:13px;;">Ctrl+C</div>
<div class="ui" style="left:351.00px;top:96.00px;letter-spacing:1.400px;font-size:13px;;">Ctrl+X</div>
<div class="ui" style="left:351.00px;top:117.00px;letter-spacing:1.400px;font-size:13px;;">Ctrl+V</div>
<div class="ui" style="left:311.10px;top:138.00px;letter-spacing:1.273px;font-size:13px;;">Ctrl+Shift+V</div>
<div class="ui" style="left:351.00px;top:180.00px;letter-spacing:1.400px;font-size:13px;;">Ctrl+A</div>
<div class="ui" style="left:359.00px;top:211.00px;letter-spacing:1.275px;font-size:13px;;">Alt+P</div>
</div>
<svg class="a" style="will-change:transform;left:237px;top:545px;" width="16" height="24" viewBox="0 0 16 24"><path d="M2.5 1.5V17.5L6 14L9 20.5L11.5 19.5L8.5 13H13.5Z" fill="#fff" stroke="#111" stroke-width="1.3" stroke-linejoin="round"/></svg>
<div id="frame"></div>
</div></body></html>
